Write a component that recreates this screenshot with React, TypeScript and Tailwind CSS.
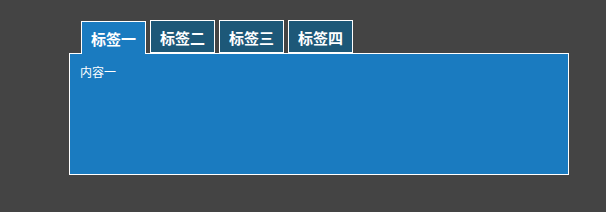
export default function App() {
  const tabs = ["标签一", "标签二", "标签三", "标签四"];
  return (
    <div
      className="w-[606px] h-[212px] bg-[#444444] pl-[69px] pt-[20px]"
      style={{ fontFamily: '"Noto Sans CJK SC", "Noto Sans", sans-serif' }}
    >
      <div className="flex items-end gap-[4px] ml-[12px] h-[33px]">
        {tabs.map((t, i) =>
          i === 0 ? (
            <div
              key={t}
              className="relative z-10 w-[65px] h-[33px] mb-[-1px] border border-b-0 border-white bg-[#1a7bc0] text-white text-[15px] font-bold flex items-center justify-center leading-none pt-[1px]"
            >
              {t}
            </div>
          ) : (
            <div
              key={t}
              className="w-[65px] h-[33px] border border-white bg-[#1d5878] text-white text-[15px] font-bold flex items-center justify-center leading-none pt-[2px]"
            >
              {t}
            </div>
          )
        )}
      </div>
      <div className="w-[500px] h-[122px] border border-white bg-[#1a7bc0] px-[10px] pt-[10px] text-white text-[12px] leading-[16px]">
        内容一
      </div>
    </div>
  );
}
